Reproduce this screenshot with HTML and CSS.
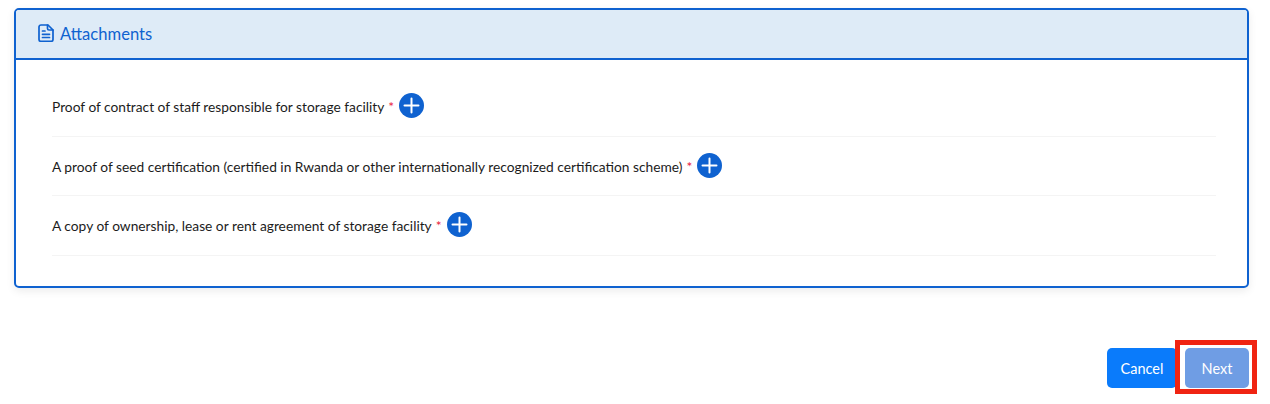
FILE: index.html
```html
<!DOCTYPE html>
<html lang="en">
<head>
    <meta charset="UTF-8">
    <meta name="viewport" content="width=device-width, initial-scale=1.0">
    <title>Attachments</title>
    <link rel="stylesheet" href="styles.css">
</head>
<body>
    <div class="card">
        <div class="card-header">
            <svg class="doc-icon" width="16" height="18" viewBox="0 0 16 18" fill="none" stroke="#0f62d0" stroke-width="1.7" stroke-linejoin="round" stroke-linecap="round">
                <path d="M3 1h7l5 5v9.500a1.800 1.800 0 0 1-1.800 1.800H2.800A1.800 1.800 0 0 1 1 15.500V3a2 2 0 0 1 2-2z"/>
                <path d="M9.500 1v3.500a1.500 1.500 0 0 0 1.500 1.500h4"/>
                <path d="M4.500 7h2.500M4.500 10.300h7M4.500 13.500h7"/>
            </svg>
            <span>Attachments</span>
        </div>
        <div class="card-body">
            <div class="attachment-row">
                <span class="label">Proof of contract of staff responsible for storage facility</span>
                <span class="required">*</span>
                <button class="add-btn" type="button">
                    <svg width="25" height="25" viewBox="0 0 25 25"><path d="M12.500 5.500v14M5.500 12.500h14" stroke="#fff" stroke-width="2" stroke-linecap="round"/></svg>
                </button>
            </div>
            <div class="attachment-row">
                <span class="label">A proof of seed certification (certified in Rwanda or other internationally recognized certification scheme)</span>
                <span class="required">*</span>
                <button class="add-btn" type="button">
                    <svg width="25" height="25" viewBox="0 0 25 25"><path d="M12.500 5.500v14M5.500 12.500h14" stroke="#fff" stroke-width="2" stroke-linecap="round"/></svg>
                </button>
            </div>
            <div class="attachment-row">
                <span class="label">A copy of ownership, lease or rent agreement of storage facility</span>
                <span class="required">*</span>
                <button class="add-btn" type="button">
                    <svg width="25" height="25" viewBox="0 0 25 25"><path d="M12.500 5.500v14M5.500 12.500h14" stroke="#fff" stroke-width="2" stroke-linecap="round"/></svg>
                </button>
            </div>
        </div>
    </div>
    <div class="actions">
        <button class="btn btn-cancel" type="button">Cancel</button>
        <div class="next-highlight">
            <button class="btn btn-next" type="button">Next</button>
        </div>
    </div>
</body>
</html>
```

FILE: styles.css
```css
body {
    margin: 0;
    padding: 8px 21px 0 14px;
    min-height: 404px;
    box-sizing: border-box;
    font-family: "Lato", "Open Sans", sans-serif;
    background-color: #fff;
    color: #1c1c1c;
}
.card {
    border: 2px solid #0f62d0;
    border-radius: 5px;
    height: 280px;
    box-sizing: border-box;
    box-shadow: 0 3px 8px rgba(0, 0, 0, 0.08);
}
.card-header {
    display: flex;
    align-items: center;
    gap: 6px;
    height: 50px;
    box-sizing: border-box;
    padding: 0 0 2px 22px;
    background-color: #deebf7;
    border-bottom: 2px solid #0f62d0;
    border-radius: 3px 3px 0 0;
    color: #0f62d0;
    font-size: 16.600px;
}
.card-header span {
    margin-top: 1px;
}
.card-body {
    padding: 17px 31px 0 36px;
}
.attachment-row {
    display: flex;
    align-items: center;
    height: 59.500px;
    padding-bottom: 1px;
    box-sizing: border-box;
    border-bottom: 1px solid #f4f4f4;
    font-size: 13.750px;
}
.label {
    margin-top: 2px;
}
.required {
    color: #e8173a;
    margin: 2px 5px 0 4px;
}
.add-btn {
    width: 25px;
    height: 25px;
    padding: 0;
    border: none;
    border-radius: 50%;
    background-color: #0f62d0;
    display: flex;
}
.actions {
    display: flex;
    justify-content: flex-end;
    gap: 8px;
    margin-top: 60px;
}
.btn {
    height: 40px;
    border: none;
    border-radius: 5px;
    color: #fff;
    font-family: inherit;
    font-size: 14.500px;
    padding: 0;
}
.btn-cancel {
    width: 70px;
    background-color: #0a7bfb;
}
.btn-next {
    width: 64px;
    background-color: #6f9de4;
    display: block;
}
/* red marker drawn over the button, it overlaps the edge of Cancel */
.next-highlight {
    position: relative;
}
.next-highlight::after {
    content: "";
    position: absolute;
    top: -8px;
    left: -10px;
    right: -8px;
    bottom: -6px;
    border: 5px solid #f02412;
}
```
